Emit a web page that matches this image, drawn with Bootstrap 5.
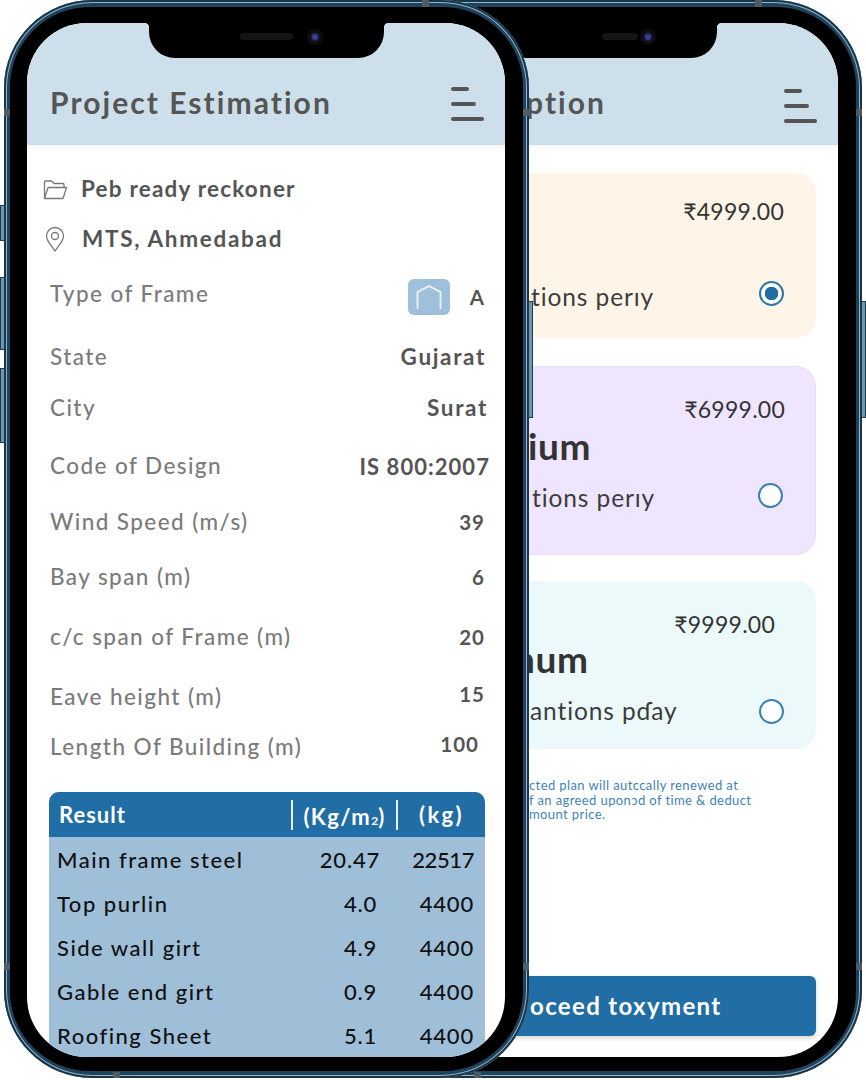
<!DOCTYPE html>
<html lang="en">
<head>
    <meta charset="UTF-8">
    <meta name="viewport" content="width=device-width, initial-scale=1.0">
    <title>Project Estimation</title>
    <link rel="stylesheet" href="https://cdn.jsdelivr.net/npm/bootstrap@5.3.0/dist/css/bootstrap.min.css">
    <script src="https://cdn.jsdelivr.net/npm/bootstrap@5.3.0/dist/js/bootstrap.bundle.min.js"></script>
    <style>
        html, body { height: 100%; }
        body {
            position: relative;
            overflow: hidden;
            background: #fff;
            font-family: "Lato", "Liberation Sans", sans-serif;
        }
        /* device frame */
        .phone {
            position: absolute;
            top: 0;
            width: 525px;
            height: 1078px;
            padding: 7px 6px;
            border-radius: 88px;
            background: #20425a;
            box-shadow: inset 0 0 0 2px #1a3546, inset 0 0 0 3px #8fb6cf;
        }
        .phone-left { left: 4px; z-index: 2; }
        .phone-right { left: 337px; z-index: 1; }
        .bezel {
            height: 100%;
            padding: 16px 18px 14px 17px;
            border-radius: 80px;
            background: #000;
        }
        .screen {
            position: relative;
            height: 100%;
            overflow: hidden;
            border-radius: 60px;
            background: #fff;
        }
        .notch {
            position: absolute;
            top: 0;
            left: 122px;
            width: 235px;
            height: 35px;
            border-radius: 0 0 26px 26px;
            background: #000;
            z-index: 3;
        }
        .notch::before,
        .notch::after {
            content: "";
            position: absolute;
            top: 0;
            width: 5px;
            height: 5px;
            background: radial-gradient(circle at 100% 100%, transparent 5px, #000 5.5px);
        }
        .notch::before { left: -5px; transform: scaleX(-1) scaleY(1); }
        .notch::after { right: -5px; }
        .speaker {
            position: absolute;
            top: 10px;
            left: 91px;
            width: 53px;
            height: 7px;
            border-radius: 4px;
            background: #151515;
        }
        .phone-right .speaker { left: 120px; width: 36px; }
        .camera {
            position: absolute;
            top: 6px;
            left: 158px;
            width: 16px;
            height: 16px;
            border-radius: 50%;
            background: radial-gradient(circle, #3a3f9a 0 2px, #14182e 4px, #0c0c0e 5px);
        }
        /* side keys and antenna bands sit on the frame edge */
        .side-key {
            position: absolute;
            width: 5px;
            background: #6f97b0;
            border: 1px solid #1c3b50;
            z-index: -1;
        }
        .key-silent { left: -4px; top: 205px; height: 36px; }
        .key-up { left: -4px; top: 277px; height: 73px; }
        .key-down { left: -4px; top: 368px; height: 75px; }
        .key-power { right: -4px; top: 301px; height: 117px; }
        .band { position: absolute; background: #4e5c68; }
        .band-l1, .band-l2 { left: 0; width: 6px; height: 7px; }
        .band-r1, .band-r2 { right: 0; width: 6px; height: 7px; }
        .band-l1, .band-r1 { top: 109px; }
        .band-l2, .band-r2 { top: 963px; }
        .band-t { top: 0; left: 418px; width: 7px; height: 7px; }
        .band-b1, .band-b2 { bottom: 0; width: 7px; height: 6px; }
        .band-b1 { left: 109px; }
        .band-b2 { left: 470px; }
        /* header */
        .app-head {
            height: 122px;
            padding: 56px 21px 0 23px;
            background: #cedfec;
            box-shadow: 0 2px 4px rgba(0, 0, 0, .05);
        }
        .app-title {
            margin: 0;
            font-size: 30px;
            font-weight: 700;
            line-height: 46px;
            letter-spacing: 2.05px;
            color: #555;
            white-space: nowrap;
        }
        .phone-right .app-title { padding-left: 143px; }
        .burger { width: 33px; padding-top: 8px; }
        .burger i {
            display: block;
            height: 4px;
            border-radius: 2px;
            background: #555;
            margin-bottom: 11px;
        }
        .burger i:nth-child(1) { width: 18px; }
        .burger i:nth-child(2) { width: 25px; }
        .burger i:nth-child(3) { width: 33px; margin-bottom: 0; }
        .phone-right .burger { padding-top: 10px; }
        /* project details */
        .detail-list { padding: 0 20px 0 23px; }
        .place-row {
            height: 30px;
            margin-top: 29px;
            margin-left: -8px;
            font-size: 22.5px;
            font-weight: 700;
            letter-spacing: 1.2px;
            color: #555;
        }
        .place-row svg { width: 26px; height: 26px; margin-right: 13px; flex: none; }
        .place-row + .place-row { margin-top: 20px; letter-spacing: 1.7px; }
        .place-row + .place-row svg { margin-right: 14px; }
        .info-row {
            height: 30px;
            font-size: 22.5px;
            letter-spacing: 1.43px;
            font-weight: 500;
            color: #7b7b7b;
        }
        .info-row b { color: #555; font-weight: 700; font-size: 20.5px; letter-spacing: 1px; }
        .info-row b.val-word { font-size: 22.5px; letter-spacing: 1.65px; margin-right: -1px; }
        .info-row:nth-child(3) { margin-top: 25px; }
        .info-row:nth-child(4) { margin-top: 33px; }
        .info-row:nth-child(5) { margin-top: 21px; }
        .info-row:nth-child(6) { margin-top: 28px; }
        .info-row:nth-child(7) { margin-top: 26px; }
        .info-row:nth-child(8) { margin-top: 25px; }
        .info-row:nth-child(9) { margin-top: 30px; }
        .info-row:nth-child(10) { margin-top: 30px; }
        .info-row:nth-child(11) { margin-top: 20px; }
        .info-row b.val-code { font-size: 22px; letter-spacing: 1.05px; margin-right: -5px; }
        .info-row b.val-surat { margin-right: -3px; }
        .val-in { margin-right: 6px; }
        .val-up { margin-bottom: 6px; }
        .frame-type { gap: 20px; margin: 6px 0 0 0; }
        .frame-box {
            display: flex;
            align-items: center;
            justify-content: center;
            width: 42px;
            height: 36px;
            border-radius: 6px;
            background: #9fc0da;
        }
        /* result table */
        .result-wrap {
            margin: 30px 20px 0 22px;
            border-radius: 10px 10px 0 0;
            overflow: hidden;
            background: #9fbfd9;
        }
        .result-head {
            height: 45px;
            background: #216da6;
            color: #fff;
            font-size: 22px;
            font-weight: 700;
            letter-spacing: 1px;
        }
        .result-head span { display: block; text-align: center; }
        .result-head .h-name { width: 242px; padding-left: 10px; text-align: left; }
        .result-head .h-rate {
            width: 107px;
            height: 30px;
            border-left: 2px solid #e6eff6;
            border-right: 2px solid #e6eff6;
            line-height: 33px;
            letter-spacing: 1.4px;
        }
        .result-head .h-rate small { font-size: 12px; letter-spacing: 0; }
        .result-head .h-total { width: 87px; letter-spacing: 2.4px; }
        .result-table { margin: 0; --bs-table-bg: transparent; --bs-table-color: #111; }
        .result-table td {
            height: 44px;
            padding: 0;
            vertical-align: middle;
            font-size: 22px;
            letter-spacing: .8px;
            font-weight: 500;
            border: 0;
            white-space: nowrap;
        }
        .result-table td:nth-child(1) { padding-left: 8px; letter-spacing: 1.5px; }
        .result-table td:nth-child(2) { width: 100px; text-align: right; padding-right: 3px; }
        .result-table td:nth-child(3) { width: 105px; text-align: right; padding-right: 11px; }
        .result-table tr:first-child td:nth-child(2) { padding-right: 0; }
        .result-table tr:first-child td:nth-child(3) { letter-spacing: -.4px; }
        /* plans: only what shows past the front phone is written out */
        .plan-body { height: 912px; padding: 28px 22px 21px 22px; }
        .plan {
            border-radius: 20px;
            padding: 0 32px 0 0;
            color: #3c3c3c;
        }
        .plan-basic { height: 165px; background: #fff4e8; }
        .plan-premium { height: 189px; margin-top: 28px; background: #f0e5ff; border: 1px solid #eaddff; }
        .plan-platinum { height: 168px; margin-top: 26px; background: #ecf9fa; }
        .plan-price {
            font-size: 23px;
            line-height: 30px;
            letter-spacing: .25px;
            text-align: right;
            color: #333;
        }
        .plan-basic .plan-price { padding-top: 23px; }
        .plan-premium .plan-price { padding-top: 27px; margin-right: -2px; }
        .plan-platinum .plan-price { padding-top: 28px; padding-right: 9px; }
        .plan-name {
            font-size: 37px;
            font-weight: 700;
            line-height: 40px;
            letter-spacing: .6px;
            color: #333;
        }
        .plan-premium .plan-name { margin-top: 2px; padding-left: 145px; }
        .plan-platinum .plan-name { padding-left: 132px; }
        .plan-spacer { height: 46px; }
        .plan-foot { margin-top: 7px; }
        .plan-premium .plan-foot { margin-top: 14px; }
        .plan-platinum .plan-foot { margin-top: 14px; }
        .plan-line {
            font-size: 24.5px;
            letter-spacing: .9px;
            padding-left: 149px;
        }
        .plan-platinum .plan-line { padding-left: 148px; }
        .plan-radio {
            width: 25px;
            height: 25px;
            margin: 0 0 8px;
            border: 2px solid #3b80b5;
            background-color: #fff;
            flex: none;
        }
        .plan-premium .plan-radio { margin-bottom: 6px; }
        .plan-platinum .plan-radio { margin-bottom: 0; }
        .plan-radio:checked {
            background-color: #fff;
            border-color: #2a75ae;
            background-image: radial-gradient(circle, #216da6 0 6.500px, transparent 7px);
        }
        .plan-note {
            margin: 29px 0 0 147px;
            font-size: 13px;
            line-height: 14.5px;
            letter-spacing: .4px;
            color: #3f83b8;
            white-space: nowrap;
        }
        .pay-btn {
            height: 60px;
            padding-left: 148px;
            border: 0;
            border-radius: 6px;
            background: #216da6;
            color: #fff;
            font-size: 24px;
            font-weight: 700;
            letter-spacing: 1.35px;
            text-align: left;
            box-shadow: 0 2px 5px rgba(0, 0, 0, .18);
        }
        .pay-btn:hover { background: #216da6; color: #fff; }
    </style>
</head>
<body>

<!-- back phone: subscription plans -->
<div class="phone phone-right">
    <span class="side-key key-power"></span>
    <span class="band band-r1"></span><span class="band band-r2"></span><span class="band band-t"></span>
    <div class="bezel">
        <div class="screen">
            <div class="notch"><div class="speaker"></div><div class="camera"></div></div>
            <div class="app-head d-flex justify-content-between align-items-start">
                <h2 class="app-title">ption</h2>
                <div class="burger"><i></i><i></i><i></i></div>
            </div>
            <div class="plan-body d-flex flex-column">
                <div class="plan plan-basic">
                    <div class="plan-price">₹4999.00</div>
                    <div class="plan-spacer"></div>
                    <div class="plan-foot d-flex justify-content-between align-items-center">
                        <div class="plan-line">tions perıy</div>
                        <input class="form-check-input plan-radio" type="radio" name="plan" checked>
                    </div>
                </div>
                <div class="plan plan-premium">
                    <div class="plan-price">₹6999.00</div>
                    <div class="plan-name">ium</div>
                    <div class="plan-foot d-flex justify-content-between align-items-center">
                        <div class="plan-line">tions perıy</div>
                        <input class="form-check-input plan-radio" type="radio" name="plan">
                    </div>
                </div>
                <div class="plan plan-platinum">
                    <div class="plan-price">₹9999.00</div>
                    <div class="plan-name">num</div>
                    <div class="plan-foot d-flex justify-content-between align-items-center">
                        <div class="plan-line">antions pɗay</div>
                        <input class="form-check-input plan-radio" type="radio" name="plan">
                    </div>
                </div>
                <p class="plan-note">cted plan will autccally renewed at<br>f an agreed uponɔd of time &amp; deduct<br>mount price.</p>
                <button class="btn pay-btn w-100 mt-auto" type="button">oceed toxyment</button>
            </div>
        </div>
    </div>
</div>

<!-- front phone: project estimation -->
<div class="phone phone-left">
    <span class="side-key key-silent"></span><span class="side-key key-up"></span><span class="side-key key-down"></span>
    <span class="side-key key-power"></span>
    <span class="band band-l1"></span><span class="band band-l2"></span><span class="band band-r1"></span><span class="band band-r2"></span>
    <span class="band band-t"></span><span class="band band-b1"></span><span class="band band-b2"></span>
    <div class="bezel">
        <div class="screen">
            <div class="notch"><div class="speaker"></div><div class="camera"></div></div>
            <div class="app-head d-flex justify-content-between align-items-start">
                <h1 class="app-title">Project Estimation</h1>
                <div class="burger"><i></i><i></i><i></i></div>
            </div>
            <div class="detail-list">
                <div class="place-row d-flex align-items-center">
                    <svg viewBox="0 0 26 26" fill="none" stroke="#777" stroke-width="1.3" stroke-linejoin="round">
                        <path d="M2.500 22.500V6a1 1 0 0 1 1-1h6l2.500 2.500h9a1 1 0 0 1 1 1V11"/>
                        <path d="M2.500 22.500 6 11.500h18.500l-3.200 10.200a1 1 0 0 1-1 .8z"/>
                    </svg>
                    Peb ready reckoner
                </div>
                <div class="place-row d-flex align-items-center">
                    <svg viewBox="0 0 26 26" fill="none" stroke="#777" stroke-width="1.3">
                        <path d="M13 25C9 19 4.500 15 4.500 10a8.500 8.500 0 0 1 17 0C21.500 15 17 19 13 25z"/>
                        <circle cx="13" cy="10" r="3.500"/>
                    </svg>
                    MTS, Ahmedabad
                </div>
                <div class="info-row d-flex justify-content-between align-items-center">
                    <span>Type of Frame</span>
                    <span class="frame-type d-flex align-items-center">
                        <span class="frame-box">
                            <svg width="26" height="26" viewBox="0 0 26 26" fill="none" stroke="#eef4f9" stroke-width="1.8">
                                <path d="M1.500 25V8L13 2l11.500 6v17"/>
                            </svg>
                        </span>
                        <b>A</b>
                    </span>
                </div>
                <div class="info-row d-flex justify-content-between align-items-center"><span>State</span><b class="val-word">Gujarat</b></div>
                <div class="info-row d-flex justify-content-between align-items-center"><span>City</span><b class="val-word val-surat">Surat</b></div>
                <div class="info-row d-flex justify-content-between align-items-center"><span>Code of Design</span><b class="val-code">IS 800:2007</b></div>
                <div class="info-row d-flex justify-content-between align-items-center"><span>Wind Speed (m/s)</span><b>39</b></div>
                <div class="info-row d-flex justify-content-between align-items-center"><span>Bay span (m)</span><b>6</b></div>
                <div class="info-row d-flex justify-content-between align-items-center"><span>c/c span of Frame (m)</span><b>20</b></div>
                <div class="info-row d-flex justify-content-between align-items-center"><span>Eave height (m)</span><b class="val-up">15</b></div>
                <div class="info-row d-flex justify-content-between align-items-center"><span>Length Of Building (m)</span><b class="val-in val-up">100</b></div>
            </div>
            <div class="result-wrap">
                <div class="result-head d-flex align-items-center">
                    <span class="h-name">Result</span>
                    <span class="h-rate">(Kg/m<small>2</small>)</span>
                    <span class="h-total">(kg)</span>
                </div>
                <table class="table result-table">
                    <tbody>
                    <tr><td>Main frame steel</td><td>20.47</td><td>22517</td></tr>
                    <tr><td>Top purlin</td><td>4.0</td><td>4400</td></tr>
                    <tr><td>Side wall girt</td><td>4.9</td><td>4400</td></tr>
                    <tr><td>Gable end girt</td><td>0.9</td><td>4400</td></tr>
                    <tr><td>Roofing Sheet</td><td>5.1</td><td>4400</td></tr>
                    </tbody>
                </table>
            </div>
        </div>
    </div>
</div>

</body>
</html>
